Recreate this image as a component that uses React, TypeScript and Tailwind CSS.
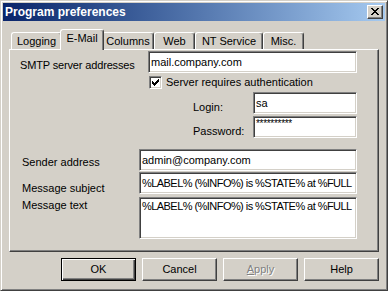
import React from "react";

const sunken =
  "bg-white border border-t-[#808080] border-l-[#808080] border-b-white border-r-white shadow-[inset_1px_1px_0_#404040,inset_-1px_-1px_0_#D4D0C8]";

function Input({ w, h = 22, children, top = false }: { w: number; h?: number; children?: React.ReactNode; top?: boolean }) {
  return (
    <div
      className={`${sunken} shrink-0 overflow-hidden whitespace-nowrap flex ${top ? "items-start pt-[2px]" : "items-center"} pl-[2px] text-[11px] leading-[13px] text-black`}
      style={{ width: w, height: h }}
    >
      {children}
    </div>
  );
}

function Tab({ label, w, selected = false }: { label: string; w: number; selected?: boolean }) {
  if (selected) {
    return (
      <div
        className="relative z-10 -mx-[2px] -mb-px h-[21px] shrink-0 bg-[#D4D0C8] border-l border-t border-r border-l-white border-t-white border-r-[#404040] shadow-[inset_-1px_0_0_#808080] rounded-t-[3px] flex justify-center pt-[2px] text-[11px] leading-[13px]"
        style={{ width: w }}
      >
        {label}
      </div>
    );
  }
  return (
    <div
      className="h-[17px] shrink-0 bg-[#D4D0C8] border-l border-t border-r border-l-white border-t-white border-r-[#404040] shadow-[inset_-1px_0_0_#808080] rounded-t-[3px] flex justify-center pt-[2px] text-[11px] leading-[13px]"
      style={{ width: w }}
    >
      {label}
    </div>
  );
}

function Button({ children, def = false, disabled = false }: { children: React.ReactNode; def?: boolean; disabled?: boolean }) {
  const base = def
    ? "border border-black shadow-[inset_1px_1px_0_#fff,inset_-1px_-1px_0_#404040,inset_-2px_-2px_0_#808080]"
    : "border border-t-white border-l-white border-b-[#404040] border-r-[#404040] shadow-[inset_-1px_-1px_0_#808080]";
  return (
    <div
      className={`${base} w-[75px] h-[23px] bg-[#D4D0C8] flex items-center justify-center text-[11px] leading-[13px] ${
        disabled ? "text-[#808080] [text-shadow:1px_1px_0_#fff]" : "text-black"
      }`}
    >
      {children}
    </div>
  );
}

const CloseX = () => (
  <svg width="8" height="7" viewBox="0 0 8 7" shapeRendering="crispEdges">
    <path
      fill="#000"
      d="M0 0h2v1h-2z M6 0h2v1h-2z M1 1h2v1h-2z M5 1h2v1h-2z M2 2h4v1h-4z M3 3h2v1h-2z M2 4h4v1h-4z M1 5h2v1h-2z M5 5h2v1h-2z M0 6h2v1h-2z M6 6h2v1h-2z"
    />
  </svg>
);

const Check = () => (
  <svg width="7" height="7" viewBox="0 0 7 7" shapeRendering="crispEdges">
    <path
      fill="#000"
      d="M6 0h1v1h-1z M5 1h2v1h-2z M0 2h1v1h-1z M4 2h3v1h-3z M0 3h2v1h-2z M3 3h3v1h-3z M0 4h5v1h-5z M1 5h3v1h-3z M2 6h1v1h-1z"
    />
  </svg>
);

export default function App() {
  return (
    <div className="font-['Liberation_Sans',Arial,sans-serif] text-black">
      <div className="w-[388px] h-[291px] bg-[#D4D0C8] border border-t-[#D4D0C8] border-l-[#D4D0C8] border-b-[#404040] border-r-[#404040] shadow-[inset_1px_1px_0_#fff,inset_-1px_-1px_0_#808080] p-[2px] flex flex-col">
        {/* Title bar */}
        <div className="h-[18px] shrink-0 bg-gradient-to-r from-[#0A246A] to-[#A6CAF0] flex items-center justify-between pl-[2px] pr-[2px]">
          <span className="text-white font-bold text-[12px] leading-[14px]">Program preferences</span>
          <div className="w-[16px] h-[14px] bg-[#D4D0C8] border border-t-white border-l-white border-b-[#404040] border-r-[#404040] shadow-[inset_-1px_-1px_0_#808080] flex items-center justify-center pb-[1px]">
            <CloseX />
          </div>
        </div>

        {/* Body */}
        <div className="pl-[6px] flex flex-col">
          {/* Tabs */}
          <div className="mt-[8px] h-[20px] flex items-end pl-[2px]">
            <Tab label="Logging" w={51} />
            <Tab label="E-Mail" w={44} selected />
            <Tab label="Columns" w={52} />
            <Tab label="Web" w={41} />
            <Tab label="NT Service" w={68} />
            <Tab label="Misc." w={41} />
          </div>

          {/* Panel */}
          <div className="w-[370px] h-[203px] border border-t-white border-l-white border-b-[#404040] border-r-[#404040] shadow-[inset_-1px_-1px_0_#808080] flex flex-col text-[11px] leading-[13px]">
            {/* SMTP row */}
            <div className="mt-[1px] flex">
              <div className="w-[138px] pl-[10px] pt-[8px] tracking-[-0.15px]">SMTP server addresses</div>
              <Input w={209}>mail.company.com</Input>
            </div>
            {/* checkbox */}
            <div className="mt-[3px] flex items-center pl-[139px]">
              <div className={`${sunken} w-[13px] h-[13px] flex items-center justify-center`}>
                <Check />
              </div>
              <span className="ml-[4px]">Server requires authentication</span>
            </div>
            {/* Login */}
            <div className="mt-[3px] flex">
              <div className="w-[243px] pl-[183px] pt-[9px]">Login:</div>
              <Input w={104}>sa</Input>
            </div>
            {/* Password */}
            <div className="mt-[2px] flex">
              <div className="w-[243px] pl-[183px] pt-[9px]">Password:</div>
              <Input w={104} top>
                <span className="text-[10px] leading-[10px] tracking-[-0.3px]">**********</span>
              </Input>
            </div>
            {/* Sender */}
            <div className="mt-[11px] flex">
              <div className="w-[129px] pl-[12px] pt-[7px]">Sender address</div>
              <Input w={218}>admin@company.com</Input>
            </div>
            {/* Subject */}
            <div className="mt-[1px] flex">
              <div className="w-[129px] pl-[12px] pt-[10px]">Message subject</div>
              <Input w={218}>
                <span className="tracking-[-0.55px]">%LABEL% (%INFO%) is %STATE% at %FULL</span>
              </Input>
            </div>
            {/* Text */}
            <div className="mt-[2px] flex">
              <div className="w-[129px] pl-[12px] pt-[2px]">Message text</div>
              <Input w={218} h={42} top>
                <span className="tracking-[-0.55px]">%LABEL% (%INFO%) is %STATE% at %FULL</span>
              </Input>
            </div>
          </div>

          {/* Buttons */}
          <div className="mt-[6px] flex justify-end gap-[6px] w-[370px]">
            <Button def>OK</Button>
            <Button>Cancel</Button>
            <Button disabled>
              <span>
                <u>A</u>pply
              </span>
            </Button>
            <Button>Help</Button>
          </div>
        </div>
      </div>
    </div>
  );
}
